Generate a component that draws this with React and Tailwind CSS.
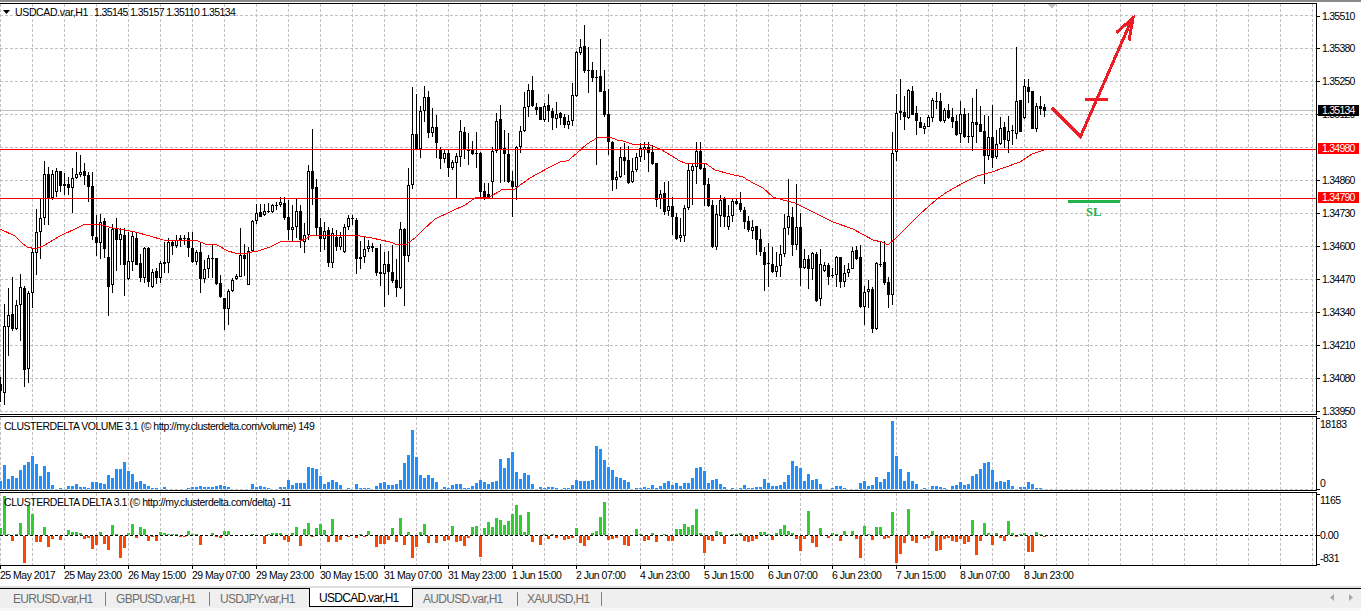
const C = [
[377,384,391,402,0],[304,326,393,405,1],[288,315,327,356,1],[277,314,329,331,0],[300,305,329,330,1],[274,287,305,341,1],[286,288,370,387,0],[291,293,369,383,1],[248,252,293,308,1],[209,232,253,275,1],
[198,218,232,259,1],[161,174,218,225,1],[167,174,198,225,0],[170,174,198,200,1],[168,171,192,197,1],[171,171,186,192,0],[173,184,186,195,0],[177,184,188,195,0],[168,178,188,213,1],[152,174,178,179,1],
[155,172,175,177,1],[163,171,176,185,0],[172,175,187,202,0],[172,186,236,240,0],[215,237,243,256,0],[214,222,243,259,1],[218,221,249,258,0],[228,257,287,316,0],[224,229,285,293,1],[218,228,240,271,0],
[228,234,240,265,1],[228,235,265,296,0],[232,261,279,280,1],[231,236,262,271,1],[233,238,265,265,0],[254,263,278,282,0],[247,248,278,283,1],[247,248,282,287,0],[269,272,287,288,1],[268,271,278,284,0],
[261,263,278,283,1],[242,262,264,273,0],[238,242,263,273,1],[240,242,246,255,0],[235,240,246,248,1],[235,238,241,247,0],[235,238,239,245,0],[232,238,248,257,0],[232,248,262,263,0],[250,252,262,265,1],
[243,252,279,293,0],[260,269,279,283,1],[255,258,269,278,1],[245,258,259,278,0],[258,258,284,285,0],[275,283,297,298,0],[298,298,309,330,0],[289,291,309,325,1],[278,280,291,292,1],[274,276,279,280,1],
[228,255,277,277,1],[244,255,259,276,0],[247,251,285,285,1],[220,221,251,252,1],[204,213,221,224,1],[204,212,217,217,0],[204,211,215,216,1],[203,211,212,213,0],[204,205,212,213,1],[202,205,206,210,0],
[197,202,205,207,1],[197,203,218,220,0],[200,217,230,240,0],[205,227,230,242,1],[199,211,227,238,1],[205,211,240,248,0],[223,235,242,253,1],[165,171,235,240,1],[129,171,189,205,0],[179,187,228,235,0],
[218,227,239,252,0],[222,231,239,250,1],[227,230,263,267,0],[228,233,263,268,1],[230,237,247,251,0],[232,237,247,250,1],[224,227,252,253,1],[215,218,227,230,1],[215,218,219,225,0],[218,220,259,274,0],
[241,257,259,269,1],[237,249,257,263,1],[240,246,249,252,1],[243,246,248,252,0],[248,248,273,276,0],[244,272,274,286,0],[252,264,274,307,1],[251,264,272,295,0],[245,272,281,283,0],[259,280,288,297,0],
[222,229,288,289,1],[228,229,256,306,0],[168,185,256,262,1],[87,134,185,189,1],[94,134,149,150,0],[106,111,149,158,1],[86,97,111,122,1],[91,97,133,138,0],[108,127,133,137,1],[115,127,143,158,0],
[147,150,159,169,0],[150,153,159,163,1],[149,153,168,177,0],[160,162,168,170,1],[153,156,163,198,1],[120,131,157,167,1],[127,132,150,159,0],[133,150,151,165,0],[141,150,154,155,0],[132,153,154,168,0],
[152,153,192,197,0],[183,191,197,200,0],[183,194,199,199,0],[147,151,182,198,1],[113,121,151,153,1],[105,119,150,183,0],[130,148,154,182,0],[133,154,182,183,0],[171,181,187,217,0],[146,147,187,200,1],
[126,131,147,153,1],[92,107,131,132,1],[84,90,107,117,1],[76,90,106,107,0],[103,107,110,115,0],[107,107,120,120,0],[103,106,120,122,1],[94,105,111,122,0],[108,111,118,130,0],[102,114,119,128,1],
[112,113,118,125,0],[114,117,125,128,0],[115,121,125,129,1],[83,95,121,126,1],[51,52,96,97,1],[39,47,53,55,1],[25,46,71,73,0],[47,70,71,93,0],[62,70,78,82,0],[70,77,78,165,0],
[39,76,92,92,0],[70,91,115,117,0],[89,114,142,155,0],[141,142,180,191,0],[171,177,180,189,1],[147,157,177,178,1],[143,157,161,175,0],[146,160,183,184,0],[158,171,182,183,1],[153,157,170,172,1],
[143,148,157,162,1],[142,147,150,160,1],[142,147,153,172,0],[145,152,164,165,0],[163,163,200,207,0],[190,194,199,209,1],[182,193,212,215,0],[181,206,211,216,1],[197,206,217,235,0],[213,217,239,240,0],
[218,235,238,242,1],[205,208,236,242,1],[164,170,208,210,1],[163,166,171,205,1],[142,151,167,184,1],[142,151,169,170,0],[163,168,185,206,0],[178,184,206,207,0],[200,205,247,248,0],[205,214,247,250,1],
[195,200,216,227,1],[197,198,217,227,0],[205,216,227,230,1],[199,201,216,222,1],[198,201,204,205,0],[192,203,210,212,0],[207,210,222,229,0],[216,221,230,232,0],[220,227,231,239,1],[226,226,240,255,0],
[229,239,252,256,0],[247,252,265,291,0],[243,263,264,287,0],[247,264,272,273,0],[252,266,272,277,1],[245,254,266,277,1],[214,228,254,257,1],[179,216,228,235,1],[207,217,245,256,0],[184,227,245,250,1],
[213,227,268,286,0],[249,259,268,269,1],[255,259,269,289,0],[252,253,269,280,1],[252,254,301,302,0],[249,264,299,306,1],[262,265,271,272,1],[263,265,277,285,0],[268,275,276,278,0],[256,257,275,287,1],
[257,257,282,288,0],[265,273,282,287,1],[263,269,273,277,1],[247,251,269,269,1],[246,250,259,260,0],[245,257,307,308,0],[286,292,307,325,1],[280,289,292,308,1],[287,289,329,333,0],[262,263,329,330,1],
[242,264,265,267,0],[241,262,283,285,0],[277,282,295,308,0],[132,153,295,305,1],[94,113,152,161,1],[79,111,113,120,0],[96,112,117,130,0],[89,90,118,119,1],[86,91,115,115,0],[106,113,121,135,0],
[117,122,128,128,0],[123,126,129,134,1],[115,117,127,127,1],[98,100,118,122,1],[92,101,102,109,0],[93,101,121,122,0],[108,110,121,123,1],[104,110,118,119,0],[108,117,122,128,0],[115,121,135,136,0],
[101,114,134,143,1],[108,114,137,138,0],[113,136,137,143,0],[98,122,137,151,1],[89,122,125,143,0],[106,124,132,132,0],[115,131,156,184,0],[116,137,156,160,1],[105,137,158,168,0],[130,144,157,159,1],
[117,128,144,145,1],[122,127,140,148,0],[116,131,141,153,1],[125,130,131,145,0],[47,101,134,139,1],[100,100,132,132,0],[79,86,118,119,1],[79,87,92,103,0],[91,91,129,129,0],[103,106,129,132,1],
[96,106,109,115,0],[104,107,111,117,0]
];

const MA = "0,229 15,236 22,243 27,247 36,249 45,245 60,236 77,228 85,224 100,224.5 113,228 125,230 135,232 150,236 163,240 190,240.5 198,241 205,244 217,245 228,251 235,253 247,253 258,251 270,247 280,242 300,241 305,239 312,235 335,236 346,235.5 360,236 372,238 390,242 398,245 407,244 415,238 423,230 435,219 450,212 465,205 475,198 488,197.5 497,192.7 503,189 515,189 523,183 530,178 537,174 550,167 560,162 568,160.7 577,153 587,144 597,138 610,137 617,140 623,141 632,144 647,144 655,147 662,150 680,161 685,163 705,163 715,170 730,174 743,177 753,183 763,188 773,197 783,200 795,203 813,212 833,222 853,229 873,240 882,242 888,245 895,239 907,227 920,214 937,199 947,192 963,183 977,176 992,172 1003,168 1020,162 1032,154 1044,150";

const VOL = [213,165,207,198,204,180,165,157,138,162,198,168,186,225,238,235,237,228,228,222,231,231,234,216,216,219,222,195,204,177,177,156,183,192,216,213,222,228,234,234,237,231,237,237,237,237,237,234,231,231,228,231,231,231,228,225,228,231,237,238,238,238,238,222,231,228,231,235,237,237,231,231,210,225,219,219,219,171,174,177,198,222,216,210,216,
225,238,234,237,222,234,234,234,237,228,219,216,225,225,222,210,159,135,60,141,195,204,195,204,216,237,231,234,225,222,222,234,234,228,219,210,216,222,216,213,147,174,144,126,186,207,189,195,222,237,231,234,231,231,234,237,234,234,225,210,213,213,213,210,108,117,150,171,180,201,204,210,216,237,234,234,231,234,225,234,228,219,213,225,219,
228,219,219,204,174,171,183,219,210,207,222,231,237,234,237,234,225,234,234,231,231,207,219,228,228,225,216,195,153,168,174,213,192,210,207,222,237,237,234,228,228,234,237,237,237,219,213,228,225,201,216,207,186,33,138,177,213,186,213,222,237,234,237,228,228,231,234,237,228,225,216,225,222,198,192,177,159,156,180,216,213,216,210,228,237,231,231,218,222,235,235,237];

const DELTA = [354,260,373,390,373,339,456,288,312,393,393,351,408,384,376,387,376,360,366,366,369,384,381,414,402,366,399,417,345,372,441,411,369,342,381,351,357,390,378,390,366,369,372,372,372,378,378,363,372,373,402,376,376,369,379,381,363,363,376,376,376,376,376,373,376,376,399,372,370,370,369,387,393,369,351,405,357,339,378,354,342,360,393,327,394,
387,376,379,376,381,372,378,363,376,408,399,399,387,354,393,324,402,366,441,408,366,342,396,376,396,376,390,387,348,393,390,405,381,351,348,438,354,336,351,324,330,345,333,312,285,315,366,306,393,376,402,372,384,372,381,376,387,384,381,354,396,405,387,369,363,321,276,387,384,381,376,402,405,376,357,372,390,387,369,393,376,372,390,390,357,
357,342,351,345,297,369,426,387,390,363,366,399,376,373,372,369,390,393,390,384,366,366,373,387,369,357,345,363,369,384,420,384,303,396,408,354,376,381,369,372,390,363,376,363,384,441,348,372,387,351,351,384,381,306,456,429,396,297,390,396,376,384,381,363,420,417,384,381,390,393,384,399,393,330,432,390,339,369,402,369,381,390,333,369,379,373,370,424,424,367,373,379];

const PRICES = [[16,"1.35510"],[48,"1.35380"],[81,"1.35250"],[114,"1.35120"],[180,"1.34860"],[213,"1.34730"],[246,"1.34600"],[279,"1.34470"],[312,"1.34340"],[345,"1.34210"],[378,"1.34080"],[411,"1.33950"]];
const TIMES = ["25 May 2017","25 May 23:00","26 May 15:00","29 May 07:00","29 May 23:00","30 May 15:00","31 May 07:00","31 May 23:00","1 Jun 15:00","2 Jun 07:00","4 Jun 23:00","5 Jun 15:00","6 Jun 07:00","6 Jun 23:00","7 Jun 15:00","8 Jun 07:00","8 Jun 23:00"];
const VX = Array.from({ length: 42 }, (_, i) => i * 32 + 0.5);
const HY = [15,48,81,114,147,180,213,246,279,312,345,378,411];

function VGrid({ y1, y2 }) {
  return VX.map((x) => <line key={x} x1={x} x2={x} y1={y1} y2={y2} stroke="#c0c0c0" strokeDasharray="3 2" />);
}

function PriceLabel({ y, text, bg, color }) {
  return (
    <g>
      <rect x="1318" y={y - 5} width="41" height="11" fill={bg} />
      <text x="1322" y={y + 4} fill={color} fontSize="10.5" className="tracking-[-0.75px]">{text}</text>
    </g>
  );
}

function MainPane() {
  return (
    <div className="relative h-[415px]">
      <svg width="1361" height="415" viewBox="0 0 1361 415" className="block overflow-visible" shapeRendering="crispEdges">
        <rect x="0" y="0" width="1361" height="2" fill="#8a8a8a" />
        <VGrid y1={4} y2={414} />
        {HY.map((y) => <line key={y} x1="0" x2="1316" y1={y + 0.5} y2={y + 0.5} stroke="#c0c0c0" strokeDasharray="3 2" />)}
        <line x1="0" x2="1316" y1="110.5" y2="110.5" stroke="#c0c0c0" />
        {C.map(([h, t, b, l, up], k) => {
          const x = k * 4;
          return (
            <g key={k}>
              <rect x={x} y={h} width="1" height={Math.max(l - h, 1)} fill="#000" />
              <rect x={x - 1} y={t} width="3" height={Math.max(b - t, 1)} fill="#000" />
              {up === 1 && b - t > 2 ? <rect x={x} y={t + 1} width="1" height={b - t - 2} fill="#fff" /> : null}
            </g>
          );
        })}
        <polyline points={MA} fill="none" stroke="#f00" strokeWidth="1" />
        <line x1="0" x2="1316" y1="149.5" y2="149.5" stroke="#f00" />
        <line x1="0" x2="1316" y1="198.5" y2="198.5" stroke="#f00" />
        <polygon points="1047,4 1056,4 1051.5,8.5" fill="#c0c0c0" />
        <rect x="1068" y="200" width="52" height="3" fill="#22b14c" />
        <text x="1086" y="216" fill="#22b14c" fontSize="12.5" fontWeight="700" className="[font-family:'Liberation_Serif',serif]">SL</text>
        <polyline points="1052,108 1080.5,136.5 1132,19" fill="none" stroke="#ed1c24" strokeWidth="3" />
        <polyline points="1116.5,32.5 1133,18 1129,40.5" fill="none" stroke="#ed1c24" strokeWidth="3" />
        <rect x="1085" y="98" width="23" height="3" fill="#ed1c24" />
        <rect x="0" y="3" width="1316" height="1" fill="#000" />
        <rect x="0" y="414" width="1316" height="1" fill="#000" />
        <rect x="1316" y="3" width="1" height="412" fill="#000" />
        {PRICES.map(([y]) => <rect key={y} x="1317" y={y} width="3" height="1" fill="#000" />)}
        {PRICES.map(([y, t]) => (
          <text key={y} x="1322" y={y + 4} fontSize="10.5" fill="#000" className="tracking-[-0.75px]">{t}</text>
        ))}
        <PriceLabel y={110} text="1.35134" bg="#000" color="#fff" />
        <PriceLabel y={148} text="1.34980" bg="#f00" color="#fff" />
        <PriceLabel y={197} text="1.34790" bg="#f00" color="#fff" />
      </svg>
      <div className="absolute left-[3px] top-[6px] flex items-center text-[10.5px] leading-[12px] text-black whitespace-pre">
        <svg width="8" height="4" viewBox="0 0 8 4" className="mr-[4px]"><polygon points="0,0 7,0 3.5,4" fill="#000" /></svg>
        <span className="tracking-[-0.35px] mr-[6px]">USDCAD.var,H1</span>
        <span className="tracking-[-0.6px]">1.35145 1.35157 1.35110 1.35134</span>
      </div>
    </div>
  );
}

function VolumePane() {
  return (
    <div className="relative h-[76px]">
      <svg width="1361" height="76" viewBox="0 415 1361 76" className="block" shapeRendering="crispEdges">
        <VGrid y1={417} y2={490} />
        <line x1="0" x2="1316" y1="489.5" y2="489.5" stroke="#c0c0c0" strokeDasharray="3 2" />
        {VOL.map((top, k) => {
          const h = Math.round((238 - top) / 3);
          return h > 0 ? <rect key={k} x={k * 4 - 1} y={489 - h} width="3" height={h} fill="#1e90ff" /> : null;
        })}
        <rect x="0" y="416" width="1316" height="1" fill="#000" />
        <rect x="0" y="490" width="1316" height="1" fill="#000" />
        <rect x="1316" y="416" width="1" height="75" fill="#000" />
        <rect x="1317" y="418" width="3" height="1" fill="#000" />
        <rect x="1317" y="489" width="3" height="1" fill="#000" />
        <text x="1320" y="427.5" fontSize="10.5" fill="#000" className="tracking-[-0.5px]">18183</text>
        <text x="1320" y="487" fontSize="10.5" fill="#000" className="tracking-[-0.5px]">0</text>
      </svg>
      <div className="absolute left-[4px] top-[5px] text-[10.5px] leading-[12px] text-black tracking-[-0.49px] whitespace-pre">
        CLUSTERDELTA VOLUME 3.1 (© http://my.clusterdelta.com/volume) 149
      </div>
    </div>
  );
}

function DeltaPane() {
  return (
    <div className="relative h-[78px]">
      <svg width="1361" height="78" viewBox="0 491 1361 78" className="block" shapeRendering="crispEdges">
        <VGrid y1={493} y2={565} />
        {DELTA.map((top, k) => {
          const v = Math.round((376 - top) / 3);
          if (v === 0) return null;
          return v > 0
            ? <rect key={k} x={k * 4 - 1} y={535 - v} width="3" height={v} fill="#32cd32" />
            : <rect key={k} x={k * 4 - 1} y={536} width="3" height={-v} fill="#ff4500" />;
        })}
        <line x1="0" x2="1316" y1="535.5" y2="535.5" stroke="#000" strokeDasharray="3 2" />
        <rect x="0" y="492" width="1316" height="1" fill="#000" />
        <rect x="0" y="565" width="1317" height="1" fill="#000" />
        <rect x="1316" y="492" width="1" height="74" fill="#000" />
        {[494, 535, 564].map((y) => <rect key={y} x="1317" y={y} width="3" height="1" fill="#000" />)}
        {TIMES.map((_, i) => <rect key={i} x={i * 64} y="566" width="1" height="3" fill="#000" />)}
        <text x="1320" y="504" fontSize="10.5" fill="#000" className="tracking-[-0.5px]">1165</text>
        <text x="1320" y="539" fontSize="10.5" fill="#000" className="tracking-[-0.5px]">0.00</text>
        <text x="1320" y="562" fontSize="10.5" fill="#000" className="tracking-[-0.5px]">-831</text>
      </svg>
      <div className="absolute left-[4px] top-[5px] text-[10.5px] leading-[12px] text-black tracking-[-0.45px] whitespace-pre">
        CLUSTERDELTA DELTA 3.1 (© http://my.clusterdelta.com/delta) -11
      </div>
    </div>
  );
}

function TimeAxis() {
  return (
    <div className="flex h-[17px] items-start">
      {TIMES.map((t) => (
        <div key={t} className="w-16 shrink-0 text-[10.5px] leading-[12px] tracking-[-0.5px] text-black whitespace-nowrap">{t}</div>
      ))}
    </div>
  );
}

function Tab({ label, w, pl }) {
  return (
    <div className={`flex h-[14px] items-center shrink-0 border-r border-[#808080] text-[12px] tracking-[-0.7px] text-[#6e6e6e] ${w} ${pl}`}>{label}</div>
  );
}

function TabBar() {
  return (
    <div className="h-[20px] bg-[#efefef] border-t border-black flex items-start relative">
      <div className="flex items-center pt-[3px]">
        <Tab label="EURUSD.var,H1" w="w-[106px]" pl="pl-[13px]" />
        <Tab label="GBPUSD.var,H1" w="w-[104px]" pl="pl-[10px]" />
        <div className="flex h-[14px] items-center shrink-0 w-[99px] pl-[10px] text-[12px] tracking-[-0.7px] text-[#6e6e6e]">USDJPY.var,H1</div>
      </div>
      <div className="flex h-[19px] w-[104px] shrink-0 items-center -mt-px pl-[9px] pt-px bg-white border-x border-b border-black text-[12px] tracking-[-0.7px] text-black">USDCAD.var,H1</div>
      <div className="flex items-center pt-[3px]">
        <Tab label="AUDUSD.var,H1" w="w-[105px]" pl="pl-[10px]" />
        <Tab label="XAUUSD,H1" w="w-[84px]" pl="pl-[9px]" />
      </div>
      <div className="ml-auto flex items-center gap-[15px] pr-[8px] pt-[5px]">
        <svg width="4" height="7" viewBox="0 0 4 7"><polygon points="4,0 4,7 0,3.5" fill="#a8a8a8" /></svg>
        <svg width="4" height="7" viewBox="0 0 4 7"><polygon points="0,0 0,7 4,3.5" fill="#a8a8a8" /></svg>
      </div>
    </div>
  );
}

export default function App() {
  return (
    <div className="w-[1361px] h-[611px] overflow-hidden bg-white flex flex-col [font-family:'Liberation_Sans',Arial,sans-serif]">
      <MainPane />
      <VolumePane />
      <DeltaPane />
      <TimeAxis />
      <div className="h-[2px] bg-[#dedede]" />
      <TabBar />
      <div className="flex-1 bg-[#f8f8f8]" />
    </div>
  );
}
